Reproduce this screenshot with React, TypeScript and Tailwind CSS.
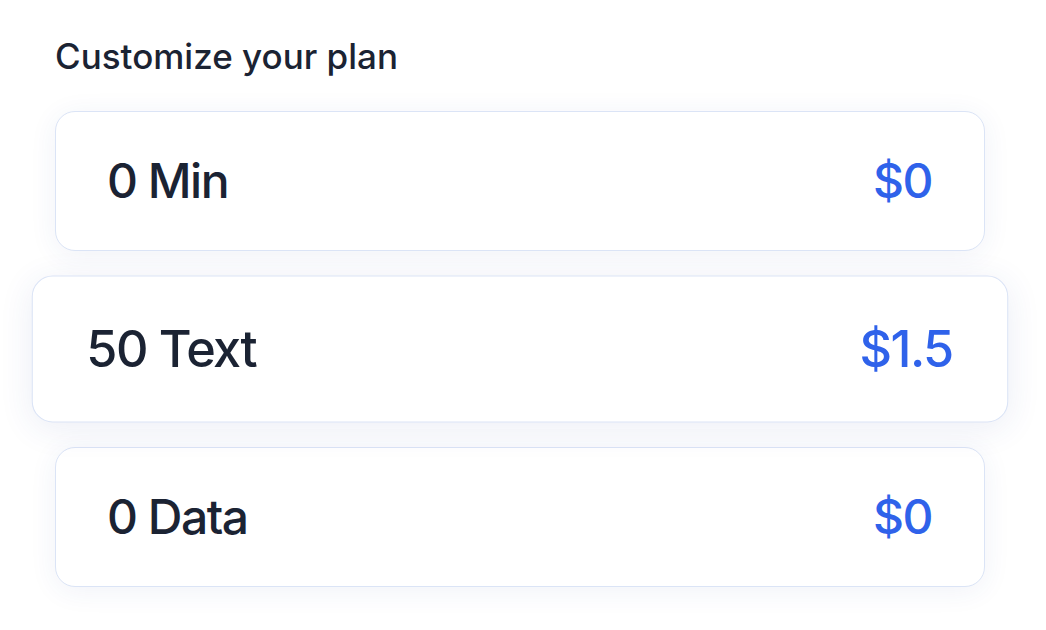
const rows = [
  { label: "0 Min", price: "$0", active: false },
  { label: "50 Text", price: "$1.5", active: true },
  { label: "0 Data", price: "$0", active: false },
];

export default function App() {
  return (
    <div
      className="min-h-screen bg-white pl-[55px] pr-[61px] pt-[34px] text-[#1b2333]"
      style={{ fontFamily: "Inter, 'Noto Sans', sans-serif" }}
    >
      <h2 className="text-[35px] font-medium leading-[44px]">Customize your plan</h2>
      <div className="mt-[33px] flex flex-col gap-[28px]">
        {rows.map((r) => (
          <div
            key={r.label}
            className={
              "flex h-[140px] items-center justify-between rounded-[20px] border border-[#dbe4f6] bg-white pl-[51px] pr-[52px] " +
              (r.active
                ? "scale-105 shadow-[0_6px_32px_rgba(40,70,150,0.09)]"
                : "shadow-[0_4px_28px_rgba(40,70,150,0.07)]")
            }
          >
            <span className="text-[48px] font-medium tracking-[-1.5px]">{r.label}</span>
            <span className="text-[48px] font-medium tracking-[-1.5px] text-[#2f62ea]">{r.price}</span>
          </div>
        ))}
      </div>
    </div>
  );
}
